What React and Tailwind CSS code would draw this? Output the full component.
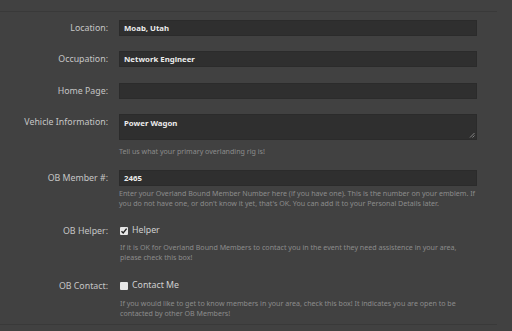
import React from "react";

const FONT = { fontFamily: '"Noto Sans", "Open Sans", sans-serif' };

function Label({ children, className = "" }) {
  return (
    <div className={`w-[108px] shrink-0 text-right text-[8.8px] leading-[16px] text-[#c6c6c6] ${className}`}>
      {children}
    </div>
  );
}

function Help({ children, className = "" }) {
  return (
    <p className={`text-[7.1px] leading-[10px] text-[#8c8c8c] ${className}`}>{children}</p>
  );
}

function TextInput({ value }) {
  return (
    <div className="h-[16px] w-[358px] bg-[#2f2f2f] border border-[#2b2b2b] px-[4px] text-[7.8px] font-bold leading-[14px] text-[#ececec]">
      {value}
    </div>
  );
}

function Check({ checked, label }) {
  return (
    <div className="flex items-center h-[16px]">
      <span className="w-[8px] h-[8px] bg-[#e6e6e6] flex items-center justify-center rounded-[1px]">
        {checked && (
          <svg width="8" height="8" viewBox="0 0 8 8" fill="none" stroke="#222" strokeWidth="1.4">
            <path d="M1.5 4.2 L3.2 6 L6.6 1.6" />
          </svg>
        )}
      </span>
      <span className="ml-[4px] text-[8.8px] text-[#d0d0d0]">{label}</span>
    </div>
  );
}

export default function App() {
  return (
    <div className="w-[512px] h-[331px] bg-[#414141] overflow-hidden flex" style={FONT}>
      <div className="w-[497px] pt-[11px]">
        <div className="border-t border-[#393939]" />

        <div className="flex mt-[8px]">
          <Label>Location:</Label>
          <div className="ml-[11px]"><TextInput value="Moab, Utah" /></div>
        </div>

        <div className="flex mt-[15px]">
          <Label>Occupation:</Label>
          <div className="ml-[11px]"><TextInput value="Network Engineer" /></div>
        </div>

        <div className="flex mt-[16px]">
          <Label>Home Page:</Label>
          <div className="ml-[11px]"><TextInput value="" /></div>
        </div>

        <div className="flex mt-[15px]">
          <Label>Vehicle Information:</Label>
          <div className="ml-[11px] w-[358px]">
            <div className="relative h-[26px] bg-[#2f2f2f] border border-[#2b2b2b] px-[4px] pt-[1px] text-[7.8px] font-bold leading-[14px] text-[#ececec]">
              Power Wagon
              <svg className="absolute right-[1px] bottom-[1px]" width="6" height="6" viewBox="0 0 6 6" stroke="#9a9a9a" strokeWidth="0.8">
                <path d="M5.5 1 L1 5.5 M5.5 3.5 L3.5 5.5" />
              </svg>
            </div>
            <Help className="mt-[6px]">Tell us what your primary overlanding rig is!</Help>
          </div>
        </div>

        <div className="flex mt-[14px]">
          <Label>OB Member #:</Label>
          <div className="ml-[11px] w-[358px]">
            <TextInput value="2465" />
            <Help className="mt-[2px]">
              Enter your Overland Bound Member Number here (if you have one). This is the number on your emblem. If
              you do not have one, or don't know it yet, that's OK. You can add it to your Personal Details later.
            </Help>
          </div>
        </div>

        <div className="flex mt-[15px]">
          <Label>OB Helper:</Label>
          <div className="ml-[12px] w-[358px]">
            <Check checked label="Helper" />
            <Help className="mt-[3px]">
              If it is OK for Overland Bound Members to contact you in the event they need assistence in your area,
              please check this box!
            </Help>
          </div>
        </div>

        <div className="flex mt-[16px]">
          <Label>OB Contact:</Label>
          <div className="ml-[12px] w-[358px]">
            <Check label="Contact Me" />
            <Help className="mt-[4px]">
              If you would like to get to know members in your area, check this box! It indicates you are open to be
              contacted by other OB Members!
            </Help>
          </div>
        </div>

        <div className="border-t border-[#393939] mt-[6px]" />
      </div>
      <div className="flex-1" />
    </div>
  );
}
